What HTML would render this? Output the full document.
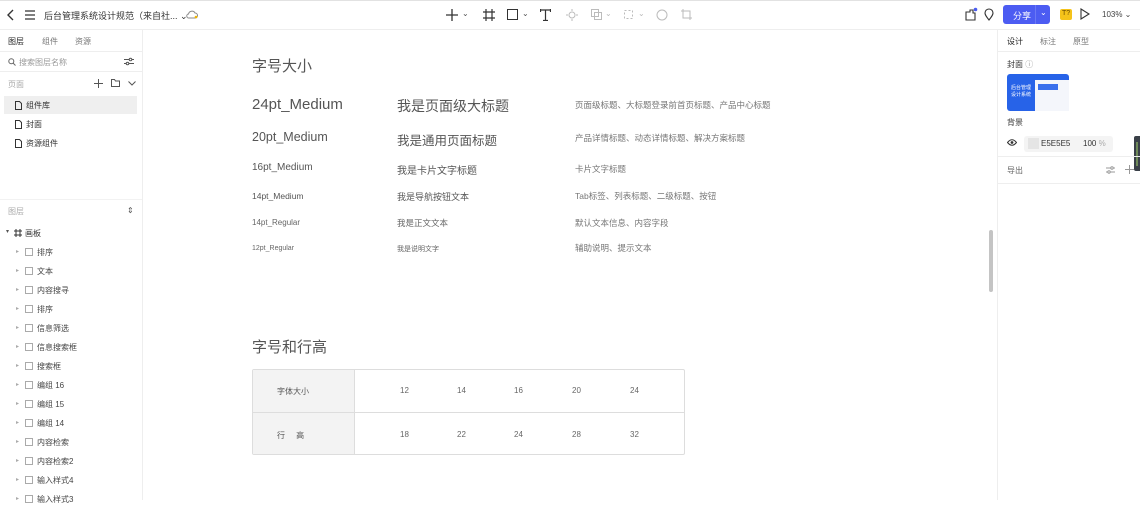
<!DOCTYPE html>
<html><head><meta charset="utf-8"><style>
*{margin:0;padding:0;box-sizing:border-box}
body{width:1140px;height:500px;overflow:hidden;background:#fff;font-family:"Liberation Sans","Noto Sans CJK SC",sans-serif;color:#333;position:relative}
.a{position:absolute;white-space:nowrap}
.hl{position:absolute;background:#ececec}
.g{color:#777}
svg{position:absolute}
</style></head><body>
<div class="hl" style="left:0;top:0;width:1140px;height:1px;background:#e2e2e2"></div>
<div class="hl" style="left:0;top:29px;width:1140px;height:1px;background:#eee"></div>
<svg style="left:6px;top:9px" width="10" height="12" viewBox="0 0 10 12"><path d="M7 1L2 6l5 5" fill="none" stroke="#333" stroke-width="1.4"/></svg>
<svg style="left:25px;top:10px" width="10" height="10" viewBox="0 0 10 10"><path d="M0 1h10M0 5h10M0 9h10" stroke="#333" stroke-width="1.2"/></svg>
<div class="a" style="left:44px;top:9px;font-size:9px;color:#333">后台管理系统设计规范（来自社... ⌄</div>
<svg style="left:186px;top:10px" width="12" height="9" viewBox="0 0 12 9"><path d="M3 8h6a2.5 2.5 0 0 0 0-5 3.5 3.5 0 0 0-6.5 1A2 2 0 0 0 3 8z" fill="none" stroke="#888" stroke-width="1"/><circle cx="10" cy="7" r="1.3" fill="#f0b400"/></svg>
<svg style="left:446px;top:9px" width="12" height="12"><path d="M6 0v12M0 6h12" stroke="#333" stroke-width="1.3"/></svg>
<div class="a" style="left:462px;top:9px;font-size:8px;color:#555">⌄</div>
<svg style="left:483px;top:9px" width="12" height="12"><path d="M3 0v12M9 0v12M0 3h12M0 9h12" stroke="#333" stroke-width="1.2"/></svg>
<svg style="left:507px;top:9px" width="11" height="11"><rect x=".5" y=".5" width="10" height="10" fill="none" stroke="#333"/></svg>
<div class="a" style="left:522px;top:9px;font-size:8px;color:#555">⌄</div>
<svg style="left:540px;top:9px" width="11" height="12"><path d="M0 1h11M5.5 1v11M3 11.5h5M.5 0v3M10.5 0v3" stroke="#333" stroke-width="1.2"/></svg>
<svg style="left:566px;top:9px" width="12" height="12"><circle cx="6" cy="6" r="3" fill="none" stroke="#bbb"/><path d="M6 0v2M6 10v2M0 6h2M10 6h2" stroke="#bbb"/></svg>
<svg style="left:591px;top:9px" width="11" height="11"><rect x=".5" y=".5" width="7" height="7" fill="none" stroke="#bbb"/><rect x="3.5" y="3.5" width="7" height="7" fill="none" stroke="#bbb"/></svg>
<div class="a" style="left:605px;top:9px;font-size:8px;color:#bbb">⌄</div>
<svg style="left:623px;top:9px" width="11" height="11"><rect x="1.5" y="1.5" width="8" height="8" fill="none" stroke="#bbb" stroke-dasharray="2 2"/></svg>
<div class="a" style="left:638px;top:9px;font-size:8px;color:#bbb">⌄</div>
<svg style="left:656px;top:9px" width="12" height="12"><circle cx="6" cy="6" r="5" fill="none" stroke="#bbb"/></svg>
<svg style="left:681px;top:9px" width="11" height="11"><path d="M2 0v9h9M0 2h9v9" fill="none" stroke="#bbb"/></svg>
<svg style="left:964px;top:7px" width="14" height="14"><path d="M2 5h4V3h3v3h2v7H2z" fill="none" stroke="#333" stroke-width="1.1"/><circle cx="11.5" cy="2.5" r="1.8" fill="#4a5cf0"/></svg>
<svg style="left:984px;top:8px" width="10" height="13"><path d="M5 12C1 7 1 6 1 5a4 4 0 0 1 8 0c0 1 0 2-4 7z" fill="none" stroke="#333" stroke-width="1.1"/></svg>
<div class="hl" style="left:1003px;top:5px;width:47px;height:19px;background:#4c5cf2;border-radius:3px"></div>
<div class="a" style="left:1013px;top:9px;font-size:9px;color:#fff">分享</div>
<div class="hl" style="left:1035px;top:5px;width:1px;height:19px;background:#6a78f5"></div>
<div class="a" style="left:1040px;top:8px;font-size:8px;color:#fff">⌄</div>
<div class="hl" style="left:1060px;top:9px;width:12px;height:11px;background:#f5c31a;border-radius:2px"></div>
<div class="a" style="left:1062px;top:10px;font-size:7px;color:#6a4a00">T?</div>
<svg style="left:1080px;top:8px" width="10" height="12"><path d="M1 1l8 5-8 5z" fill="none" stroke="#333" stroke-width="1.1"/></svg>
<div class="a" style="left:1102px;top:10px;font-size:8px;color:#444">103% ⌄</div>
<!-- left panel -->
<div class="hl" style="left:142px;top:30px;width:1px;height:470px;background:#eee"></div>
<div class="a" style="left:8px;top:36px;font-size:8px;color:#222">图层</div>
<div class="a" style="left:42px;top:36px;font-size:8px;color:#777">组件</div>
<div class="a" style="left:75px;top:36px;font-size:8px;color:#777">资源</div>
<div class="hl" style="left:0;top:51px;width:142px;height:1px;background:#eee"></div>
<svg style="left:8px;top:58px" width="8" height="8"><circle cx="3.3" cy="3.3" r="2.5" fill="none" stroke="#666"/><path d="M5 5l2.5 2.5" stroke="#666"/></svg>
<div class="a" style="left:19px;top:57px;font-size:8px;color:#999">搜索图层名称</div>
<svg style="left:124px;top:57px" width="10" height="9"><path d="M0 2.5h10M0 6.5h10" stroke="#555"/><circle cx="6.5" cy="2.5" r="1.3" fill="#fff" stroke="#555"/><circle cx="3.5" cy="6.5" r="1.3" fill="#fff" stroke="#555"/></svg>
<div class="hl" style="left:0;top:71px;width:142px;height:1px;background:#eee"></div>
<div class="a" style="left:8px;top:79px;font-size:8px;color:#aaa">页面</div>
<svg style="left:94px;top:79px" width="9" height="9"><path d="M4.5 0v9M0 4.5h9" stroke="#555"/></svg>
<svg style="left:111px;top:79px" width="9" height="8"><path d="M.5.5h3l1 1.5h4v5.5h-8z" fill="none" stroke="#555"/></svg>
<svg style="left:128px;top:81px" width="8" height="5"><path d="M.5.5l3.5 3.5 3.5-3.5" fill="none" stroke="#555"/></svg>
<div class="hl" style="left:4px;top:96px;width:133px;height:18px;background:#efefef"></div>
<div id="pages"></div>
<div class="hl" style="left:0;top:199px;width:142px;height:1px;background:#f2f2f2"></div>
<div class="a" style="left:8px;top:206px;font-size:8px;color:#aaa">图层</div>
<div class="a" style="left:127px;top:206px;font-size:8px;color:#555">⇕</div>
<div class="a" style="left:6px;top:228px;font-size:6px;color:#555">▾</div>
<svg style="left:14px;top:229px" width="8" height="8"><path d="M2 0v8M6 0v8M0 2h8M0 6h8" stroke="#333"/></svg>
<div class="a" style="left:25px;top:228px;font-size:8px;color:#333">画板</div>
<div id="layers"></div>
<!-- canvas -->
<div class="a" style="left:252px;top:55px;font-size:15px;color:#555">字号大小</div>
<div class="a" style="left:252px;top:96px;font-size:15px;color:#555">24pt_Medium</div>
<div class="a" style="left:397px;top:96px;font-size:14px;color:#555">我是页面级大标题</div>
<div class="a g" style="left:575px;top:99px;font-size:8.5px">页面级标题、大标题登录前首页标题、产品中心标题</div>
<div class="a" style="left:252px;top:130px;font-size:12.5px;color:#555">20pt_Medium</div>
<div class="a" style="left:397px;top:130px;font-size:12.5px;color:#555">我是通用页面标题</div>
<div class="a g" style="left:575px;top:132px;font-size:8.5px">产品详情标题、动态详情标题、解决方案标题</div>
<div class="a" style="left:252px;top:162px;font-size:10px;color:#555">16pt_Medium</div>
<div class="a" style="left:397px;top:162px;font-size:10px;color:#555">我是卡片文字标题</div>
<div class="a g" style="left:575px;top:163px;font-size:8.5px">卡片文字标题</div>
<div class="a" style="left:252px;top:191px;font-size:8.5px;color:#555">14pt_Medium</div>
<div class="a" style="left:397px;top:190px;font-size:9px;color:#555">我是导航按钮文本</div>
<div class="a g" style="left:575px;top:190px;font-size:8.5px">Tab标签、列表标题、二级标题、按钮</div>
<div class="a" style="left:252px;top:218px;font-size:8px;color:#666">14pt_Regular</div>
<div class="a" style="left:397px;top:217px;font-size:8.5px;color:#666">我是正文文本</div>
<div class="a g" style="left:575px;top:217px;font-size:8.5px">默认文本信息、内容字段</div>
<div class="a" style="left:252px;top:245px;font-size:7px;color:#666">12pt_Regular</div>
<div class="a" style="left:397px;top:244px;font-size:7px;color:#666">我是说明文字</div>
<div class="a g" style="left:575px;top:242px;font-size:8.5px">辅助说明、提示文本</div>
<div class="a" style="left:252px;top:336px;font-size:15px;color:#555">字号和行高</div>
<div class="hl" style="left:252px;top:369px;width:433px;height:86px;background:#fff;border:1px solid #ddd;border-radius:2px"></div>
<div class="hl" style="left:253px;top:370px;width:101px;height:84px;background:#f3f3f3"></div>
<div class="hl" style="left:354px;top:370px;width:1px;height:84px;background:#ddd"></div>
<div class="hl" style="left:253px;top:412px;width:431px;height:1px;background:#ddd"></div>
<div class="a" style="left:277px;top:386px;font-size:8px;color:#555">字体大小</div>
<div class="a" style="left:277px;top:430px;font-size:8px;color:#555">行&nbsp;&nbsp;&nbsp;&nbsp;&nbsp;高</div>
<div class="a" style="left:400px;top:386px;font-size:8px;color:#666">12</div>
<div class="a" style="left:457px;top:386px;font-size:8px;color:#666">14</div>
<div class="a" style="left:514px;top:386px;font-size:8px;color:#666">16</div>
<div class="a" style="left:572px;top:386px;font-size:8px;color:#666">20</div>
<div class="a" style="left:630px;top:386px;font-size:8px;color:#666">24</div>
<div class="a" style="left:400px;top:430px;font-size:8px;color:#666">18</div>
<div class="a" style="left:457px;top:430px;font-size:8px;color:#666">22</div>
<div class="a" style="left:514px;top:430px;font-size:8px;color:#666">24</div>
<div class="a" style="left:572px;top:430px;font-size:8px;color:#666">28</div>
<div class="a" style="left:630px;top:430px;font-size:8px;color:#666">32</div>
<div class="hl" style="left:989px;top:230px;width:4px;height:62px;background:#c4c4c4;border-radius:2px"></div>
<!-- right panel -->
<div class="hl" style="left:997px;top:30px;width:1px;height:470px;background:#eee"></div>
<div class="a" style="left:1007px;top:36px;font-size:8px;color:#222">设计</div>
<div class="a" style="left:1040px;top:36px;font-size:8px;color:#777">标注</div>
<div class="a" style="left:1073px;top:36px;font-size:8px;color:#777">原型</div>
<div class="hl" style="left:998px;top:51px;width:142px;height:1px;background:#eee"></div>
<div class="a" style="left:1007px;top:59px;font-size:8px;color:#333">封面 <span style="color:#999">ⓘ</span></div>
<div class="hl" style="left:1007px;top:74px;width:62px;height:37px;background:#2763e8;border-radius:3px"></div>
<div class="hl" style="left:1035px;top:80px;width:34px;height:31px;background:#f4f6fb"></div>
<div class="hl" style="left:1038px;top:84px;width:20px;height:6px;background:#3a70ec"></div>
<div class="a" style="left:1011px;top:85px;font-size:5px;color:#fff;line-height:7px">后台管理<br>设计系统</div>
<div class="a" style="left:1007px;top:117px;font-size:8px;color:#333">背景</div>
<svg style="left:1007px;top:139px" width="10" height="7"><path d="M.5 3.5Q5-2 9.5 3.5Q5 9 .5 3.5z" fill="none" stroke="#333"/><circle cx="5" cy="3.5" r="1.4" fill="#333"/></svg>
<div class="hl" style="left:1024px;top:136px;width:89px;height:16px;background:#f4f4f4;border-radius:3px"></div>
<div class="hl" style="left:1028px;top:138px;width:11px;height:11px;background:#e5e5e5"></div>
<div class="a" style="left:1041px;top:139px;font-size:8px;color:#333">E5E5E5</div>
<div class="a" style="left:1083px;top:139px;font-size:8px;color:#333">100 <span style="color:#aaa">%</span></div>
<div class="hl" style="left:1134px;top:136px;width:6px;height:35px;background:#3a4048;border-radius:2px 0 0 2px"></div>
<div class="hl" style="left:1136px;top:142px;width:2px;height:24px;background:#6f8a5a"></div>
<div class="hl" style="left:998px;top:156px;width:142px;height:1px;background:#eee"></div>
<div class="a" style="left:1007px;top:165px;font-size:8px;color:#666">导出</div>
<svg style="left:1106px;top:166px" width="9" height="8"><path d="M0 2h9M0 6h9" stroke="#999"/><circle cx="6" cy="2" r="1.2" fill="#fff" stroke="#999"/><circle cx="3" cy="6" r="1.2" fill="#fff" stroke="#999"/></svg>
<svg style="left:1125px;top:165px" width="9" height="9"><path d="M4.5 0v9M0 4.5h9" stroke="#999"/></svg>
<div class="hl" style="left:998px;top:183px;width:142px;height:1px;background:#eee"></div>
<script>
var p=["组件库","封面","资源组件"],ph="";
p.forEach(function(t,i){var y=100+i*19;ph+='<svg style="left:15px;top:'+(y+1)+'px" width="7" height="9"><path d="M.5.5h4l2 2v6h-6z" fill="none" stroke="#333"/></svg><div class="a" style="left:26px;top:'+y+'px;font-size:8px;color:#333">'+t+'</div>';});
document.getElementById("pages").innerHTML=ph;
var n=["排序","文本","内容搜寻","排序","信息筛选","信息搜索框","搜索框","编组 16","编组 15","编组 14","内容检索","内容检索2","输入样式4","输入样式3"],h="";
n.forEach(function(t,i){var y=247+i*19;h+='<div class="a" style="left:16px;top:'+(y+1)+'px;font-size:6px;color:#aaa">▸</div><div class="hl" style="left:25px;top:'+(y+1)+'px;width:8px;height:8px;background:#fff;border:1px solid #aaa"></div><div class="a" style="left:37px;top:'+y+'px;font-size:8px;color:#444">'+t+'</div>';});
document.getElementById("layers").innerHTML=h;
</script>
</body></html>
